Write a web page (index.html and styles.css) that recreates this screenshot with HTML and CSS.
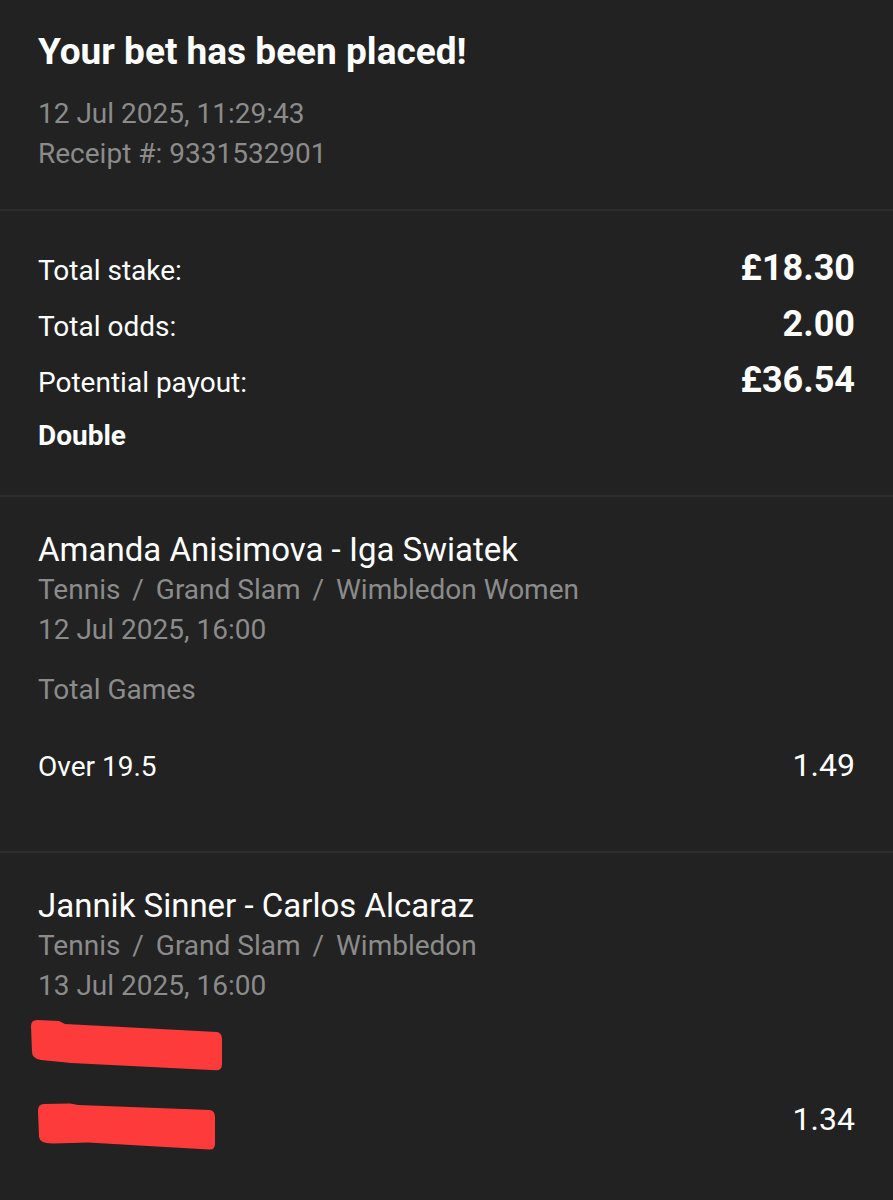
FILE: index.html
```html
<!DOCTYPE html>
<html lang="en">
<head>
<meta charset="utf-8">
<title>Bet receipt</title>
<link rel="stylesheet" href="styles.css">
</head>
<body>
<main class="receipt">
  <section class="header">
    <h1 class="title">Your bet has been placed!</h1>
    <div class="meta">12 Jul 2025, 11:29:43</div>
    <div class="meta">Receipt #: 9331532901</div>
  </section>

  <section class="summary">
    <div class="sum-row"><span class="sum-label">Total stake:</span><span class="sum-value">£18.30</span></div>
    <div class="sum-row"><span class="sum-label">Total odds:</span><span class="sum-value">2.00</span></div>
    <div class="sum-row"><span class="sum-label">Potential payout:</span><span class="sum-value">£36.54</span></div>
    <div class="bet-type">Double</div>
  </section>

  <section class="leg">
    <div class="event">Amanda Anisimova - Iga Swiatek</div>
    <div class="meta">Tennis <span class="sep">/</span> Grand Slam <span class="sep">/</span> Wimbledon Women</div>
    <div class="meta">12 Jul 2025, 16:00</div>
    <div class="meta market">Total Games</div>
    <div class="sel-row"><span class="sel-name">Over 19.5</span><span class="sel-odds">1.49</span></div>
  </section>

  <section class="leg">
    <div class="event">Jannik Sinner - Carlos Alcaraz</div>
    <div class="meta">Tennis <span class="sep">/</span> Grand Slam <span class="sep">/</span> Wimbledon</div>
    <div class="meta">13 Jul 2025, 16:00</div>
    <div class="market">
      <svg class="redact redact-1" width="192" height="51" viewBox="0 0 192 51"><path d="M6,0 L28,1 L34,4 L186,12 Q191,13 191,19 L191,44 Q191,50.5 185,50.3 L120,47 L40,43 L10,40 Q1,38.5 1,32 L0,6 Q0,0 6,0 Z"/></svg>
    </div>
    <div class="sel-row sel-row-last">
      <svg class="redact redact-2" width="178" height="47" viewBox="0 0 178 47"><path d="M6,1 L32,0.5 L40,2 L172,7 Q177,8 177,14 L177,41 Q177,47 171,46.5 L110,43 L50,39.5 L16,40.5 Q2,41 1,34 L0,8 Q0,1 6,1 Z"/></svg>
      <span class="sel-odds">1.34</span>
    </div>
  </section>
</main>
</body>
</html>
```

FILE: styles.css
```css
html, body {
  margin: 0;
  padding: 0;
  background: #222222;
}

body {
  font-family: Roboto, "Liberation Sans", Arial, sans-serif;
  color: #ffffff;
  font-size: 28px;
  line-height: 40px;
}

.receipt {
  display: flex;
  flex-direction: column;
}

section {
  padding: 0 38px;
  border-bottom: 2px solid #2d2d2d;
}

section:last-child {
  border-bottom: none;
}

.header {
  padding-top: 30px;
  padding-bottom: 35px;
}

.title {
  margin: 0 0 20px 0;
  font-size: 37px;
  line-height: 44px;
  font-weight: 700;
  color: #ffffff;
}

.meta {
  color: #8b8b8b;
  font-size: 28px;
  line-height: 40px;
}

.sep {
  padding: 0 5px;
}

.summary {
  padding-top: 32px;
  padding-bottom: 34px;
}

.sum-row {
  display: flex;
  justify-content: space-between;
  align-items: baseline;
  height: 56px;
}

.sum-label {
  line-height: 56px;
}

.sum-value {
  font-size: 36px;
  line-height: 1;
  font-weight: 700;
}

.bet-type {
  font-weight: 700;
  line-height: 50px;
}

.leg {
  padding-top: 33px;
  padding-bottom: 64px;
}

.leg:last-child {
  padding-bottom: 44px;
}

.event {
  font-size: 33px;
  line-height: 40px;
  color: #ffffff;
}

.market {
  margin-top: 20px;
  height: 40px;
}

.sel-row {
  display: flex;
  justify-content: space-between;
  align-items: baseline;
  margin-top: 35px;
}

.sel-row-last {
  margin-top: 39px;
}

.sel-name {
  line-height: 40px;
}

.sel-odds {
  font-size: 32px;
  line-height: 40px;
}

.redact {
  display: block;
  fill: #fd3b3b;
}

.redact-1 {
  margin: -6px 0 0 -7px;
}

.redact-2 {
  align-self: flex-start;
  margin-top: 4px;
}
```
